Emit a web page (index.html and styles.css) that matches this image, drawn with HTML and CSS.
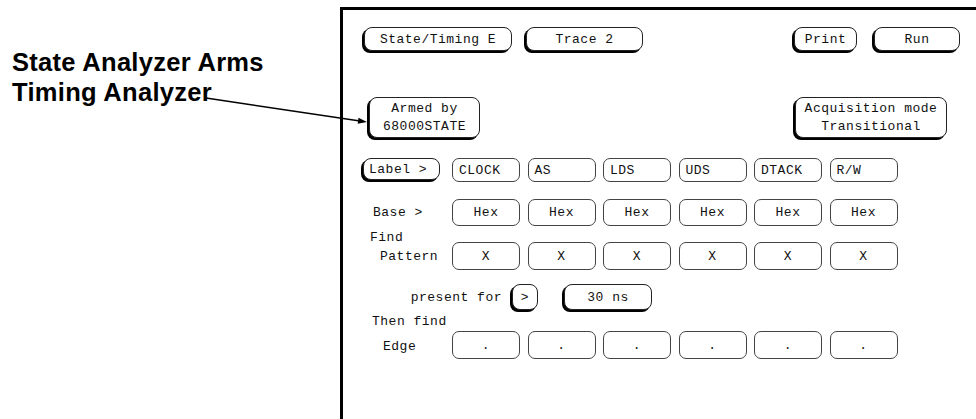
FILE: index.html
```html
<!DOCTYPE html>
<html lang="en">
<head>
    <meta charset="UTF-8">
    <title>Timing Analyzer Trace</title>
    <link rel="stylesheet" href="styles.css">
</head>
<body>

    <div class="page">
        <div class="note">
            <p class="note-text">State Analyzer Arms<br>Timing Analyzer</p>
        </div>

        <div class="screen">
            <div class="top-row">
                <div class="btn btn-mode">State/Timing E</div>
                <div class="btn btn-trace">Trace 2</div>
                <div class="btn btn-print">Print</div>
                <div class="btn btn-run">Run</div>
            </div>

            <div class="info-row">
                <div class="btn btn-info btn-armed">Armed by<br>68000STATE</div>
                <div class="btn btn-info btn-acq">Acquisition mode<br>Transitional</div>
            </div>

            <div class="row row-label">
                <div class="head"><div class="btn btn-label">Label &gt;</div></div>
                <div class="cell cell-left">CLOCK</div>
                <div class="cell cell-left">AS</div>
                <div class="cell cell-left">LDS</div>
                <div class="cell cell-left">UDS</div>
                <div class="cell cell-left">DTACK</div>
                <div class="cell cell-left">R/W</div>
            </div>

            <div class="row row-base">
                <div class="head head-base">Base &gt;</div>
                <div class="cell">Hex</div>
                <div class="cell">Hex</div>
                <div class="cell">Hex</div>
                <div class="cell">Hex</div>
                <div class="cell">Hex</div>
                <div class="cell">Hex</div>
            </div>

            <div class="row row-pattern">
                <div class="head head-two">
                    <span class="line line-find">Find</span>
                    <span class="line line-pattern">Pattern</span>
                </div>
                <div class="cell">X</div>
                <div class="cell">X</div>
                <div class="cell">X</div>
                <div class="cell">X</div>
                <div class="cell">X</div>
                <div class="cell">X</div>
            </div>

            <div class="present-row">
                <span class="present-label">present for</span>
                <div class="btn btn-cmp">&gt;</div>
                <div class="btn btn-time">30 ns</div>
            </div>

            <div class="row row-edge">
                <div class="head head-two head-edge">
                    <span class="line line-then">Then find</span>
                    <span class="line line-edge">Edge</span>
                </div>
                <div class="cell">.</div>
                <div class="cell">.</div>
                <div class="cell">.</div>
                <div class="cell">.</div>
                <div class="cell">.</div>
                <div class="cell">.</div>
            </div>
        </div>

        <svg class="arrow" width="976" height="419" viewBox="0 0 976 419">
            <line x1="206" y1="98" x2="360" y2="121" stroke="#000" stroke-width="1.5"/>
            <polygon points="367,122 358.5,117.7 357.7,123.7" fill="#000"/>
        </svg>
    </div>

</body>
</html>
```

FILE: styles.css
```css
html, body {
    margin: 0;
    padding: 0;
    background: #fff;
}
.page {
    position: relative;
    width: 976px;
    height: 419px;
    display: flex;
    overflow: hidden;
}
.note {
    width: 340px;
    flex-shrink: 0;
}
.note-text {
    margin: 47px 0 0 12px;
    font-family: "Liberation Sans", Arial, sans-serif;
    font-weight: bold;
    font-size: 25.5px;
    line-height: 30px;
    letter-spacing: 0.3px;
    color: #000;
}
.screen {
    flex: 1;
    margin-top: 7px;
    height: 412px;
    box-sizing: border-box;
    border-top: 3px solid #000;
    border-left: 3px solid #000;
    padding: 17px 16px 0 21px;
    font-family: "Liberation Mono", "DejaVu Sans Mono", monospace;
    font-size: 13px;
    letter-spacing: 0.5px;
    color: #111;
    white-space: nowrap;
}
.btn {
    box-sizing: border-box;
    border: 1px solid #222;
    border-radius: 8px;
    box-shadow: -2px 2px 0 #000;
    display: flex;
    align-items: center;
    justify-content: center;
    text-align: center;
    background: #fff;
}
.top-row {
    display: flex;
    height: 24px;
}
.top-row .btn {
    height: 24px;
}
.btn-mode {
    width: 148px;
}
.btn-trace {
    width: 117px;
    margin-left: 14px;
}
.btn-print {
    width: 63px;
    margin-left: auto;
}
.btn-run {
    width: 86px;
    margin-left: 17px;
}
.info-row {
    display: flex;
    justify-content: space-between;
    margin-top: 46px;
}
.btn-info {
    height: 41px;
    line-height: 18px;
}
.btn-armed {
    width: 111px;
    margin-left: 5px;
}
.btn-acq {
    width: 152px;
    margin-right: 13px;
}
.row {
    display: grid;
    grid-template-columns: 83.5px repeat(6, 68px);
    column-gap: 7.5px;
    margin-left: -3px;
    align-items: end;
}
.cell {
    box-sizing: border-box;
    border: 1px solid #444;
    border-radius: 7px;
    display: flex;
    align-items: center;
    justify-content: center;
}
.cell-left {
    justify-content: flex-start;
    padding-left: 6px;
}
.row-label {
    margin-top: 20px;
}
.row-label .cell {
    height: 24px;
}
.btn-label {
    width: 77px;
    height: 22px;
    margin: 0 0 2px 2px;
    justify-content: flex-start;
    padding-left: 5px;
}
.row-base {
    margin-top: 17px;
    align-items: center;
}
.row-base .cell {
    height: 27px;
}
.head-base {
    padding-left: 12px;
}
.row-pattern {
    margin-top: 5px;
}
.row-pattern .cell,
.row-edge .cell {
    height: 28px;
}
.head-two {
    display: flex;
    flex-direction: column;
    line-height: 14px;
    gap: 5px;
    padding-bottom: 6px;
}
.line-find {
    padding-left: 9px;
}
.line-pattern {
    padding-left: 19px;
}
.present-row {
    display: flex;
    align-items: center;
    margin: 14px 0 0 -3px;
    height: 26px;
}
.present-label {
    width: 151px;
    box-sizing: border-box;
    text-align: right;
    padding-right: 10px;
}
.btn-cmp {
    width: 26px;
    height: 26px;
}
.btn-time {
    width: 88px;
    height: 26px;
    margin-left: 26px;
}
.row-edge {
    margin-top: 5px;
}
.head-edge {
    gap: 11px;
    padding-bottom: 5px;
}
.line-then {
    padding-left: 11px;
}
.line-edge {
    padding-left: 22px;
}
.arrow {
    position: absolute;
    top: 0;
    left: 0;
    pointer-events: none;
}
```
